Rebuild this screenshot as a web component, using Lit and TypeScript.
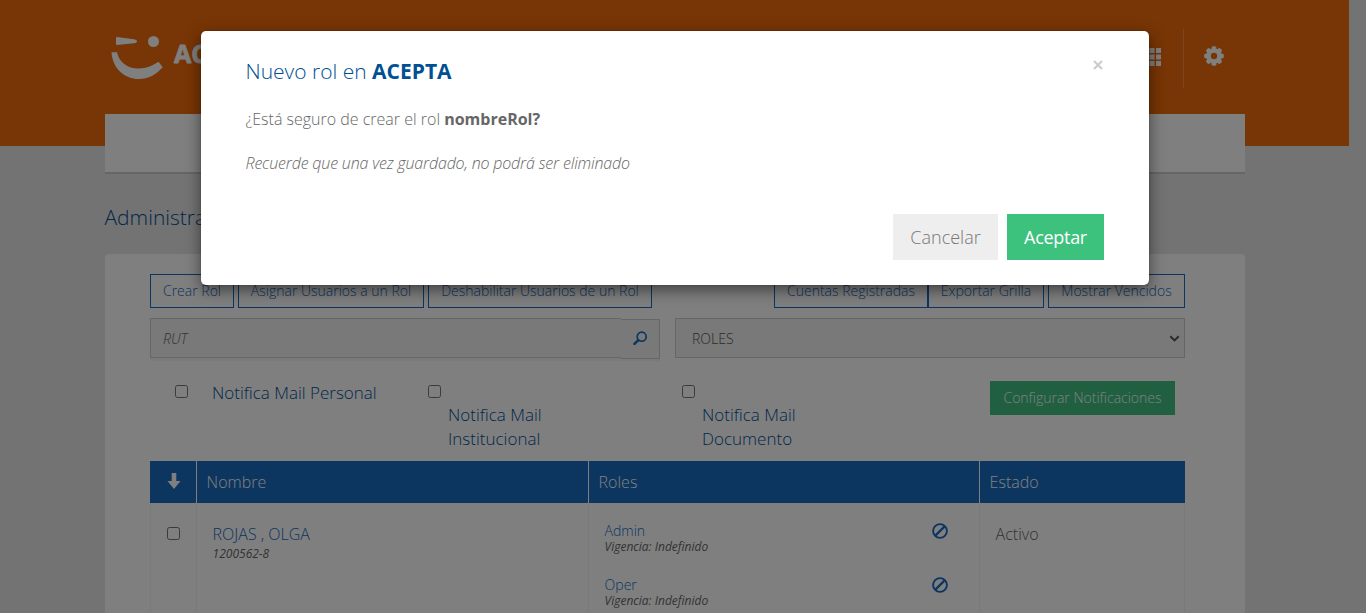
import { LitElement, html, svg, css } from "lit";
import { customElement } from "lit/decorators.js";

const ban = html`<svg class="ban" viewBox="0 0 16 16" width="16" height="16">
  <circle cx="8" cy="8" r="6.900" fill="none" stroke="currentColor" stroke-width="1.900" />
  <path d="M3.600 12.400 12.400 3.600" stroke="currentColor" stroke-width="2.200" />
</svg>`;

const teeth = [0, 45, 90, 135].map(
  (a) => svg`<path d="M7.600 1.800 8.500 .2h3l.9 1.600v16.400L11.500 19.800h-3l-.9-1.600z" transform="rotate(${a} 10 10)" />`
);

const gear = html`<svg viewBox="0 0 20 20" width="20" height="20">
  <mask id="hole"><rect width="20" height="20" fill="#fff" /><circle cx="10" cy="10" r="3.200" fill="#000" /></mask>
  <g fill="#fff" mask="url(#hole)"><circle cx="10" cy="10" r="7.600" />${teeth}</g>
</svg>`;

@customElement("app-root")
export class AppRoot extends LitElement {
  static styles = css`
    :host {
      display: block;
      height: 613px;
      overflow: hidden;
      background: #e6e6e6;
      font: 300 14px/20px "Open Sans", sans-serif;
      color: #666;
      position: relative;
    }
    * { box-sizing: border-box; }
    svg { display: block; }
    .page { width: 1349px; }
    header {
      background: #f06a0a;
      height: 146px;
      padding: 0 105px;
    }
    .top { display: flex; height: 114px; justify-content: space-between; }
    .logo { margin: 30px 0 0 5px; }
    .logo text { font: 700 25px "Open Sans", sans-serif; }
    .tools { display: flex; padding: 29px 0 0; height: 88px; }
    .tool { padding: 17px 20px 0; }
    .tool.apps { padding: 19px 22px 0; border-right: 1px solid #fa8a3c; }
    nav {
      width: 1140px;
      height: 58px;
      margin: -32px 0 0 105px;
      background: #fff;
      box-shadow: 0 2px 0 #ccc;
      position: relative;
    }
    h1 {
      margin: 31px 0 22px 104.5px;
      font: 300 21px/29px "Open Sans", sans-serif;
      color: #005094;
    }
    .card {
      width: 1140px;
      height: 500px;
      margin-left: 105px;
      padding: 20px 60px 0 45px;
      background: #fff;
      border-radius: 4px;
    }
    .actions { display: flex; width: 1035px; }
    .btn {
      height: 34px;
      border: 1px solid #186ac0;
      color: #186ac0;
      line-height: 32px;
      text-align: center;
      white-space: nowrap;
      flex: none;
      margin-right: 4px;
    }
    .w84 { width: 84px; } .w186 { width: 186px; } .w224 { width: 224px; }
    .w154 { width: 154px; margin: 0 0 0 118px; }
    .w116 { width: 116px; } .w137 { width: 137px; margin: 0; }
    .filters { display: flex; gap: 15px; width: 1035px; margin-top: 10px; }
    .search { display: flex; width: 510px; height: 40px; box-shadow: 0 3px 0 #f4f4f4; }
    .rut {
      flex: 1;
      border: 1px solid #ccc;
      border-right: 0;
      background: #f2f2f2;
      padding: 0 12px;
      line-height: 40px;
      font-style: italic;
    }
    .find {
      width: 39px;
      height: 40px;
      margin-top: 1px;
      padding: 11px 0 0 12px;
      border: 1px solid #ccc;
      border-left: 0;
      background: #f2f2f2;
    }
    .select {
      display: flex;
      justify-content: space-between;
      width: 510px;
      height: 40px;
      padding: 0 4px 0 16px;
      border: 1px solid #ccc;
      background: #f2f2f2;
      line-height: 40px;
      color: #555;
    }
    .select svg { margin-top: 16px; }
    .notify {
      display: grid;
      grid-template-columns: 253px 254px 308px 185px;
      width: 1035px;
      height: 103px;
      padding: 23px 0 0 25px;
      color: #005094;
      font-size: 17px;
      line-height: 24px;
    }
    .opt { display: flex; align-items: flex-start; }
    .box { flex: none; width: 13px; height: 13px; border: 1px solid #767676; border-radius: 2.5px; background: #fff; margin-top: 4px; }
    .opt span { margin: 0 0 0 24px; white-space: nowrap; }
    .opt.low span { margin: 22px 0 0 7px; }
    .config {
      height: 34px;
      background: #40c080;
      color: #fff;
      font-size: 14px;
      line-height: 34px;
      text-align: center;
      white-space: nowrap;
    }
    .row { display: grid; grid-template-columns: 46px 391px 390px 205px; gap: 1px; width: 1035px; }
    .head { height: 42px; background: #fff; color: #fff; font-size: 16px; line-height: 42px; }
    .head div { background: #186ac0; padding-left: 9.6px; }
    .head .arrow { padding: 12px 0 0 16.5px; }
    .body { height: 150px; grid-template-columns: 46px 392px 391px 206px; gap: 0; }
    .body > div { border-left: 1px solid #f4f4f4; padding: 19px 0 0 15.6px; font-size: 16px; line-height: 24px; }
    .body > div:last-child { border-right: 1px solid #f4f4f4; }
    .body > div:first-child { padding: 20px 0 0 16px; }
    .body .box { margin: 4px 0 0 0; }
    .link { color: #186ac0; }
    .small { font-style: italic; font-size: 12px; line-height: 16px; font-weight: 400; }
    .role { display: flex; justify-content: space-between; height: 54px; padding-right: 31.5px; font-size: 14px; line-height: 17px; color: #186ac0; }
    .role .small { color: #666; line-height: 16px; }
    .ban { margin-top: 1px; }
    .overlay {
      position: absolute;
      inset: 0;
      background: rgba(0, 0, 0, 0.5);
    }
    .modal {
      position: absolute;
      left: 201px;
      top: 31px;
      width: 948px;
      height: 254px;
      padding: 26px 45px 0 44.5px;
      background: #fff;
      border-radius: 5px;
      box-shadow: 0 5px 15px rgba(0, 0, 0, 0.5), 0 0 1px rgba(0, 0, 0, 0.6);
      font-size: 16px;
      line-height: 24px;
    }
    .mhead { display: flex; justify-content: space-between; height: 29px; }
    h2 { margin: 0; font: 300 21px/29px "Open Sans", sans-serif; color: #005094; }
    b { font-weight: 700; }
    .close { margin: 3px 1.5px 0 0; }
    .modal p { margin: 21px 0 0; }
    .modal p + p { margin-top: 20px; }
    .modal i { letter-spacing: -0.175px; }
    .mfoot { display: flex; justify-content: flex-end; gap: 9px; margin-top: 39px; font-size: 18px; line-height: 46px; text-align: center; }
    .cancel { width: 105px; height: 46px; background: #eee; color: #777; }
    .accept { width: 97px; height: 46px; background: #3dc27e; color: #fff; font-weight: 400; letter-spacing: -0.3px; }
  `;

  render() {
    return html`
      <div class="page">
        <header>
          <div class="top">
            <svg class="logo" width="190" height="54" viewBox="0 0 190 54" fill="#fff">
              <path d="M7 7Q6 7 6 8V14Q6 15 7 15L24 13.200Q27 13 27 11.300T24 9.300Z" />
              <circle cx="43.500" cy="11.500" r="5.500" />
              <path d="M1.500 22.200H7C9 32 17.500 38.500 28.500 38.500 37 38.500 43 35.500 48.500 31.800L52.700 37.200C46 44.500 38.500 49 29 49 14 49 2.500 38 1.500 22.200Z" />
              <text x="64" y="33" stroke="#fff" stroke-width=".8" stroke-linejoin="round">ACEPTA</text>
            </svg>
            <div class="tools">
              <div class="tool apps">
                <svg width="18" height="18" viewBox="0 0 18 18" fill="#fff">
                  ${[0, 6.5, 13].map((y) => [0, 6.5, 13].map((x) => svg`<rect x=${x} y=${y} width="5" height="5" />`))}
                </svg>
              </div>
              <div class="tool">${gear}</div>
            </div>
          </div>
        </header>
        <nav></nav>
        <h1>Administración de Usuarios</h1>
        <div class="card">
          <div class="actions">
            <div class="btn w84">Crear Rol</div>
            <div class="btn w186">Asignar Usuarios a un Rol</div>
            <div class="btn w224">Deshabilitar Usuarios de un Rol</div>
            <div class="btn w154">Cuentas Registradas</div>
            <div class="btn w116">Exportar Grilla</div>
            <div class="btn w137">Mostrar Vencidos</div>
          </div>
          <div class="filters">
            <div class="search">
              <div class="rut">RUT</div>
              <div class="find">
                <svg width="15" height="15" viewBox="0 0 15 15" fill="none" stroke="#186ac0">
                  <circle cx="8.700" cy="5.700" r="4.500" stroke-width="1.700" />
                  <path d="M5.300 9.100 1.500 12.900" stroke-width="2.500" stroke-linecap="round" />
                </svg>
              </div>
            </div>
            <div class="select">
              ROLES
              <svg width="11" height="8" viewBox="0 0 11 8" fill="none" stroke="#555" stroke-width="2"><path d="M1.300 1.200 5.500 5.400 9.700 1.200" /></svg>
            </div>
          </div>
          <div class="notify">
            <div class="opt"><div class="box"></div><span>Notifica Mail Personal</span></div>
            <div class="opt low"><div class="box"></div><span>Notifica Mail<br />Institucional</span></div>
            <div class="opt low"><div class="box"></div><span>Notifica Mail<br />Documento</span></div>
            <div class="config">Configurar Notificaciones</div>
          </div>
          <div class="row head">
            <div class="arrow">
              <svg width="14" height="17" viewBox="0 0 14 17" fill="#fff"><path d="M4.700 0H9.300V8H13.500L7 16 .5 8H4.700Z" /></svg>
            </div>
            <div>Nombre</div>
            <div>Roles</div>
            <div>Estado</div>
          </div>
          <div class="row body">
            <div><div class="box"></div></div>
            <div><div class="link">ROJAS , OLGA</div><div class="small">1200562-8</div></div>
            <div class="roles">
              ${["Admin", "Oper"].map(
                (r) => html`<div class="role"><div>${r}<div class="small">Vigencia: Indefinido</div></div>${ban}</div>`
              )}
            </div>
            <div>Activo</div>
          </div>
        </div>
      </div>
      <div class="overlay"></div>
      <div class="modal">
        <div class="mhead">
          <h2>Nuevo rol en <b>ACEPTA</b></h2>
          <svg class="close" width="10" height="10" viewBox="0 0 10 10" stroke="#ccc" stroke-width="2.200"><path d="M1 1 9 9M9 1 1 9" /></svg>
        </div>
        <p>¿Está seguro de crear el rol <b>nombreRol?</b></p>
        <p><i>Recuerde que una vez guardado, no podrá ser eliminado</i></p>
        <div class="mfoot">
          <div class="cancel">Cancelar</div>
          <div class="accept">Aceptar</div>
        </div>
      </div>
    `;
  }
}
